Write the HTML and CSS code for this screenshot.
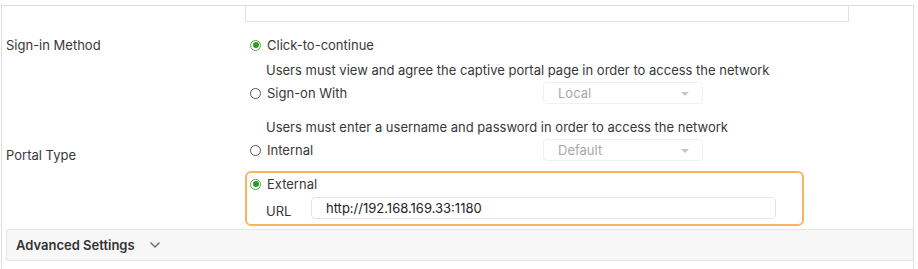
FILE: index.html
```html
<!DOCTYPE html>
<html lang="en">
<head>
    <meta charset="UTF-8">
    <meta name="viewport" content="width=device-width, initial-scale=1.0">
    <title>Portal Settings</title>
    <link rel="stylesheet" href="styles.css">
</head>
<body>
    <div class="panel">
        <div class="top-field"></div>

        <div class="form-row signin">
            <div class="form-label">Sign-in Method</div>
            <div class="form-field">
                <div class="option">
                    <label class="radio"><span class="dot checked"></span>Click-to-continue</label>
                </div>
                <div class="desc desc-1">Users must view and agree the captive portal page in order to access the network</div>
                <div class="option">
                    <label class="radio"><span class="dot"></span>Sign-on With</label>
                    <div class="select">Local<span class="caret"></span></div>
                </div>
                <div class="desc desc-2">Users must enter a username and password in order to access the network</div>
            </div>
        </div>

        <div class="form-row portal">
            <div class="form-label">Portal Type</div>
            <div class="form-field">
                <div class="option option-internal">
                    <label class="radio"><span class="dot"></span>Internal</label>
                    <div class="select">Default<span class="caret"></span></div>
                </div>
                <div class="external-box">
                    <div class="option">
                        <label class="radio"><span class="dot checked"></span>External</label>
                    </div>
                    <div class="url-row">
                        <span class="url-label">URL</span>
                        <div class="url-input">http://192.168.169.33:1180</div>
                    </div>
                </div>
            </div>
        </div>

        <div class="advanced">
            <span>Advanced Settings</span>
            <svg class="chevron" width="12" height="8" viewBox="0 0 12 8"><path d="M1.5 1.5 L6 6 L10.5 1.5" fill="none" stroke="#666" stroke-width="1.3"/></svg>
        </div>
    </div>
</body>
</html>
```

FILE: styles.css
```css
body {
    margin: 0;
    font-family: Inter, "Noto Sans", sans-serif;
    font-size: 13px;
    color: #383838;
    background: #fff;
    overflow: hidden;
    height: 269px;
}
.panel {
    margin: 5px 0 0 1px;
    width: 907px;
    height: 263px;
    border: 1px solid #dedede;
    border-bottom: none;
    padding-left: 4px;
}
.top-field {
    margin-left: 239px;
    width: 602px;
    height: 15px;
    border: 1px solid #e2e2e2;
    border-top: none;
}
.form-row {
    display: flex;
}
.form-label {
    width: 238px;
    line-height: 22px;
}
.form-field {
    flex: 1;
}
.signin {
    margin-top: 12px;
}
.option {
    display: flex;
    align-items: center;
    height: 22px;
}
.radio {
    display: flex;
    align-items: center;
    width: 293px;
    padding-left: 6px;
}
.dot {
    width: 9px;
    height: 9px;
    border: 1.5px solid #555;
    border-radius: 50%;
    margin-right: 6px;
    position: relative;
}
.dot.checked {
    border-color: #4caf3c;
}
.dot.checked::after {
    content: "";
    position: absolute;
    left: 1.5px;
    top: 1.5px;
    width: 6px;
    height: 6px;
    border-radius: 50%;
    background: #2f9a22;
}
.desc {
    line-height: 20px;
    padding-left: 22px;
}
.desc-1 {
    margin-top: 4px;
    margin-bottom: 2px;
}
.desc-2 {
    margin-top: 13px;
}
.select {
    width: 144px;
    height: 20px;
    border: 1px solid #f0f0f0;
    border-radius: 4px;
    color: #a8a8a8;
    padding-left: 14px;
    line-height: 20px;
    position: relative;
}
.caret {
    position: absolute;
    right: 13px;
    top: 9px;
    border-left: 4px solid transparent;
    border-right: 4px solid transparent;
    border-top: 4px solid #c4c4c4;
}
.portal {
    margin-top: 1px;
}
.portal .form-label {
    padding-top: 6px;
}
.option-internal {
    height: 24px;
}
.external-box {
    margin-top: 9px;
    margin-left: 1px;
    width: 555px;
    height: 51px;
    border: 2px solid #f9b45e;
    border-radius: 6px;
}
.external-box .radio {
    padding-left: 3px;
}
.url-row {
    display: flex;
    align-items: center;
    margin-top: 2px;
}
.url-label {
    width: 45px;
    padding-left: 19px;
    padding-top: 6px;
}
.url-input {
    width: 449px;
    height: 20px;
    line-height: 20px;
    border: 1px solid #e4e4e4;
    border-radius: 4px;
    padding-left: 14px;
    color: #222;
}
.advanced {
    margin-top: 3px;
    height: 30px;
    border: 1px solid #e6e6e6;
    border-right: none;
    border-radius: 3px 0 0 3px;
    background: #f7f7f7;
    display: flex;
    align-items: center;
    padding-left: 9px;
    font-weight: 600;
    color: #333;
}
.chevron {
    margin-left: 14px;
}
```
